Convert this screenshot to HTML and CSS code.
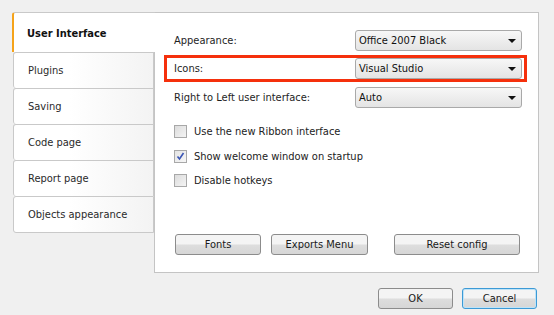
FILE: index.html
```html
<!DOCTYPE html>
<html lang="en">
<head>
	<meta charset="UTF-8">
	<title>Options</title>
	<link rel="stylesheet" href="styles.css">
</head>
<body>
	<div class="dialog">
		<div class="main">
			<ul class="tabs">
				<li class="tab tab-active">User Interface</li>
				<li class="tab">Plugins</li>
				<li class="tab">Saving</li>
				<li class="tab">Code page</li>
				<li class="tab">Report page</li>
				<li class="tab tab-last">Objects appearance</li>
			</ul>
			<div class="panel">
				<div class="field">
					<span class="label">Appearance:</span>
					<div class="combo"><span>Office 2007 Black</span><i class="arrow"></i></div>
				</div>
				<div class="field field-mark">
					<span class="label">Icons:</span>
					<div class="combo"><span>Visual Studio</span><i class="arrow"></i></div>
				</div>
				<div class="field">
					<span class="label">Right to Left user interface:</span>
					<div class="combo"><span>Auto</span><i class="arrow"></i></div>
				</div>
				<div class="checks">
					<label class="check"><span class="box"></span>Use the new Ribbon interface</label>
					<label class="check"><span class="box box-on"><svg width="11" height="11" viewBox="0 0 11 11"><path d="M2.5 5.5 L4.5 8 L8.5 2" fill="none" stroke="#3a55b4" stroke-width="1.6"/></svg></span>Show welcome window on startup</label>
					<label class="check"><span class="box"></span>Disable hotkeys</label>
				</div>
				<div class="panel-btns">
					<div class="btn btn-fonts">Fonts</div>
					<div class="btn btn-exports">Exports Menu</div>
					<div class="btn btn-reset">Reset config</div>
				</div>
			</div>
		</div>
		<div class="footer">
			<div class="btn btn-ok">OK</div>
			<div class="btn btn-cancel">Cancel</div>
		</div>
	</div>
</body>
</html>
```

FILE: styles.css
```css
*{margin: 0;padding: 0;box-sizing: border-box;}
body{
	background-color: #f0f0f0;
	font-family: "DejaVu Sans Condensed", "Liberation Sans", sans-serif;
	font-size: 11px;
	color: #1e1e1e;
}
.dialog{width: 554px;height: 315px;}
.main{
	display: flex;
	padding: 12px 0 0 12px;
}
/*左侧标签*/
.tabs{
	list-style: none;
	width: 143px;
	margin-right: -1px;
	position: relative;
	z-index: 1;
}
.tab{
	height: 36px;
	line-height: 36px;
	margin-left: 1px;
	margin-right: 1px;
	padding-left: 14px;
	border: 1px solid #c9c9c9;
	border-bottom: none;
	border-radius: 3px 0 0 3px;
	background: linear-gradient(to right, #ffffff 40%, #f3f3f3);
	color: #2a2a2a;
}
.tab-last{
	height: 37px;
	border-bottom: 1px solid #c9c9c9;
}
.tab-active{
	height: 40px;
	line-height: 41px;
	margin-left: 0;
	margin-right: 0;
	padding-left: 13px;
	border-left: 2px solid #f5a31a;
	border-right: none;
	border-radius: 3px 0 0 0;
	background: #fff;
	font-weight: bold;
	color: #111;
}
/*右侧面板*/
.panel{
	width: 385px;
	height: 261px;
	background-color: #fff;
	border: 1px solid #c4c4c4;
	padding: 14px 11px 17px 9px;
	display: flex;
	flex-direction: column;
}
.field{
	display: flex;
	align-items: center;
	justify-content: space-between;
	height: 27px;
	padding: 0 2px 0 7px;
	border: 3px solid transparent;
	margin-bottom: 1px;
}
.field-mark{
	border-color: #f5300c;
	margin-bottom: 2px;
}
.combo{
	position: relative;
	width: 167px;
	height: 21px;
	line-height: 19px;
	padding-left: 3px;
	border: 1px solid #a9a9a9;
	border-radius: 3px;
	background: linear-gradient(#f7f7f7, #e4e4e4);
	color: #111;
}
.arrow{
	position: absolute;
	right: 5px;
	top: 8px;
	width: 0;
	height: 0;
	border-left: 4px solid transparent;
	border-right: 4px solid transparent;
	border-top: 4px solid #111;
}
.checks{
	padding: 13px 0 0 10px;
}
.check{
	display: flex;
	align-items: center;
	height: 13px;
	margin-bottom: 11.5px;
	color: #222;
}
.box{
	width: 13px;
	height: 13px;
	margin-right: 7px;
	border: 1px solid #a8a8a8;
	background: linear-gradient(135deg, #dcdcdc, #f4f4f4);
	display: flex;
	align-items: center;
	justify-content: center;
}
.box-on{
	background: linear-gradient(135deg, #e4e4e4, #f6f6f6);
}
.panel-btns{
	margin-top: auto;
	display: flex;
	padding-left: 11px;
}
.btn{
	height: 21px;
	line-height: 19px;
	text-align: center;
	border: 1px solid #8c8c8c;
	border-radius: 3px;
	background: linear-gradient(#f4f4f4 45%, #dddddd 55%, #d6d6d6);
	color: #1a1a1a;
}
.btn-fonts{width: 86px;margin-right: 10px;}
.btn-exports{width: 97px;margin-right: 26px;}
.btn-reset{width: 126px;}
.footer{
	display: flex;
	justify-content: flex-end;
	padding: 15px 17px 0 0;
}
.btn-ok{width: 75px;margin-right: 9px;}
.btn-cancel{
	width: 75px;
	border-color: #3c9ad6;
	box-shadow: inset 0 0 0 1px #bfe3f7;
}
```
